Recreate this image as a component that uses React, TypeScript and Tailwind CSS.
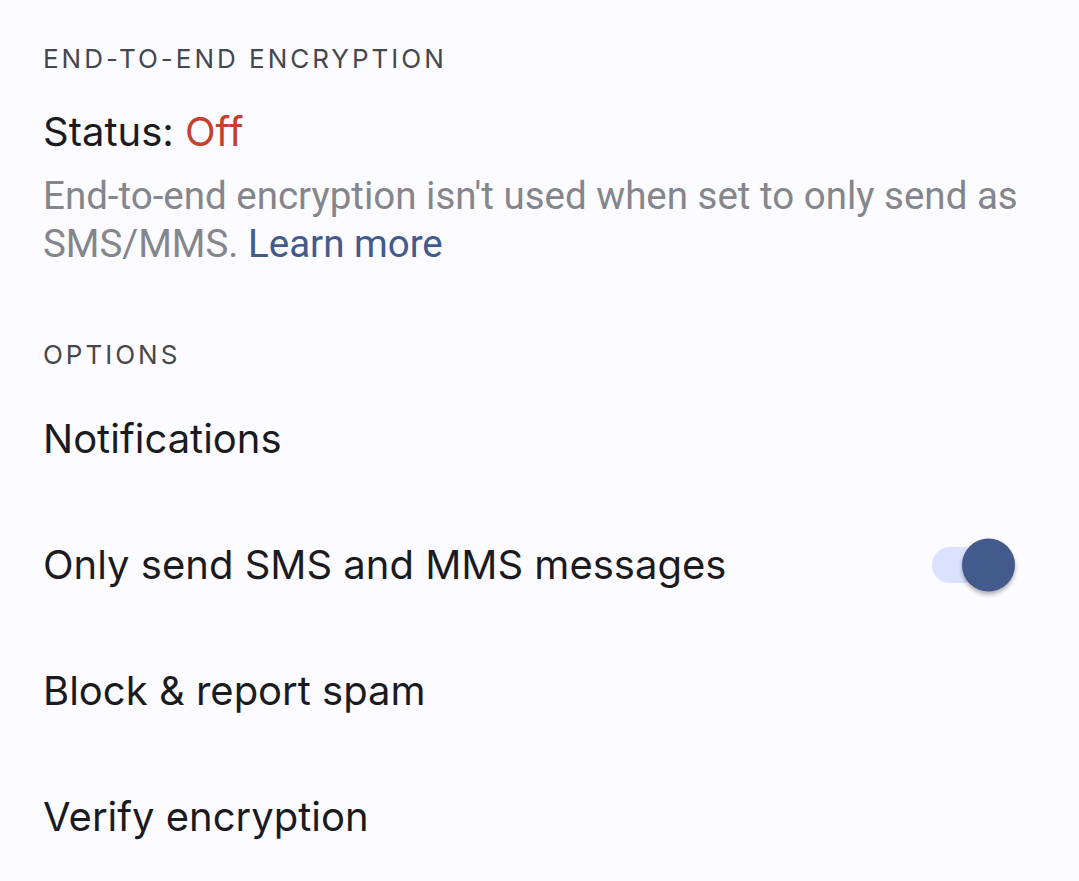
import { FC, useState } from "react";

const SectionLabel: FC<{ children: React.ReactNode }> = ({ children }) => (
  <h3 className="font-['Inter'] text-[26px] leading-[32px] tracking-[0.115em] text-[#44474e] uppercase">{children}</h3>
);

const Row: FC<{ label: string; children?: React.ReactNode }> = ({ label, children }) => (
  <div className="flex items-center justify-between h-[126px]">
    <span className="font-['Inter'] text-[40px] text-[#1b1b1f]">{label}</span>
    {children}
  </div>
);

const Toggle: FC<{ on: boolean; onChange: () => void }> = ({ on, onChange }) => (
  <button
    onClick={onChange}
    className={`relative w-[72px] h-[36px] rounded-full mr-[75px] ${on ? "bg-[#dae2ff]" : "bg-[#e1e2ec]"}`}
  >
    <span
      className={`absolute top-1/2 -translate-y-1/2 w-[53px] h-[53px] rounded-full shadow-[0_3px_4px_rgba(0,0,0,0.3)] ${
        on ? "right-[-11px] bg-[#435a8c]" : "left-[-11px] bg-[#74777f]"
      }`}
    />
  </button>
);

export default function App() {
  const [smsOnly, setSmsOnly] = useState(true);

  return (
    <div className="w-[1079px] h-[881px] bg-[#fcfbff] pl-[43px] overflow-hidden font-['Roboto']">
      <div className="pt-[43px]">
        <SectionLabel>End-to-end encryption</SectionLabel>
      </div>
      <p className="mt-[33px] font-['Inter'] text-[40px] leading-[48px] text-[#1b1b1f]">
        Status: <span className="text-[#c5402f]">Off</span>
      </p>
      <p className="mt-[16px] pr-[40px] text-[38.5px] leading-[48px] text-[#84868b]">
        End-to-end encryption isn't used when set to only send as SMS/MMS.{" "}
        <a href="#" className="text-[#435a8c]">Learn more</a>
      </p>

      <div className="mt-[71px]">
        <SectionLabel>Options</SectionLabel>
      </div>
      <div className="mt-[5px]">
        <Row label="Notifications" />
        <Row label="Only send SMS and MMS messages">
          <Toggle on={smsOnly} onChange={() => setSmsOnly(!smsOnly)} />
        </Row>
        <Row label="Block & report spam" />
        <Row label="Verify encryption" />
      </div>
    </div>
  );
}
